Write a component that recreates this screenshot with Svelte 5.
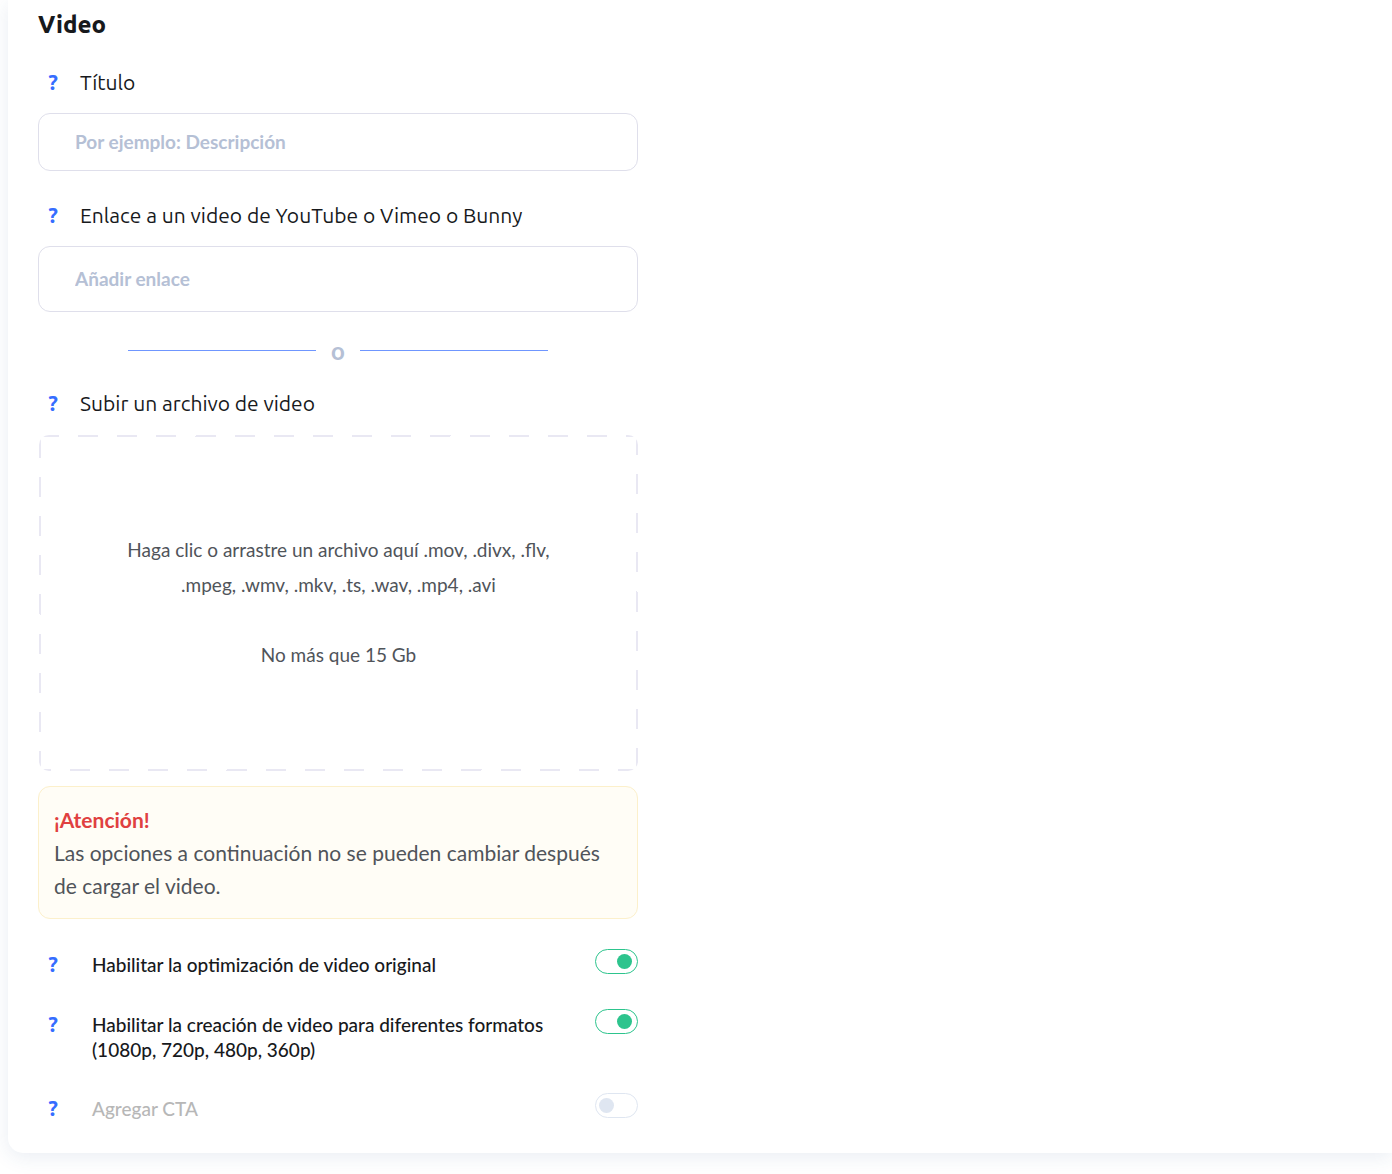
<script>
    let title = $state('');
    let link = $state('');

    let options = $state([
        { id: 'optimize', label: 'Habilitar la optimización de video original', checked: true, disabled: false },
        { id: 'formats', label: 'Habilitar la creación de video para diferentes formatos (1080p, 720p, 480p, 360p)', checked: true, disabled: false },
        { id: 'cta', label: 'Agregar CTA', checked: false, disabled: true }
    ]);
</script>

{#snippet help()}
    <button type="button" class="help" aria-label="Ayuda">?</button>
{/snippet}

<main class="page">
    <section class="card">
        <form class="form">
            <h2>Video</h2>

            <div class="label-row">
                {@render help()}
                <label for="title">Título</label>
            </div>
            <input id="title" class="field" type="text" placeholder="Por ejemplo: Descripción" bind:value={title} />

            <div class="label-row">
                {@render help()}
                <label for="link">Enlace a un video de YouTube o Vimeo o Bunny</label>
            </div>
            <input id="link" class="field tall" type="text" placeholder="Añadir enlace" bind:value={link} />

            <div class="divider">o</div>

            <div class="label-row upload">
                {@render help()}
                <span>Subir un archivo de video</span>
            </div>
            <button type="button" class="dropzone">
                <span>Haga clic o arrastre un archivo aquí .mov, .divx, .flv, .mpeg, .wmv, .mkv, .ts, .wav, .mp4, .avi</span>
                <span>No más que 15 Gb</span>
            </button>

            <div class="notice">
                <strong>¡Atención!</strong>
                <p>Las opciones a continuación no se pueden cambiar después de cargar el video.</p>
            </div>

            <div class="options">
                {#each options as option (option.id)}
                    <div class="option" class:disabled={option.disabled}>
                        {@render help()}
                        <label for={option.id}>{option.label}</label>
                        <input
                            id={option.id}
                            class="toggle"
                            type="checkbox"
                            disabled={option.disabled}
                            bind:checked={option.checked}
                        />
                    </div>
                {/each}
            </div>
        </form>
    </section>
</main>

<style>
    :global(body) {
        margin: 0;
        background: #fff;
    }

    .page {
        padding: 0 0 21px 8px;
        overflow: hidden;
        font-family: Lato, sans-serif;
        color: #17191c;
    }

    .card {
        padding: 10px 30px 30px;
        background: #fff;
        border-radius: 0 0 0 15px;
        box-shadow: 0 4px 20px rgba(38, 75, 135, 0.1);
    }

    .form {
        max-width: 600px;
    }

    h2 {
        margin: 0 0 30px;
        font-family: Ubuntu, "Noto Sans", sans-serif;
        font-size: 24px;
        line-height: 30px;
        font-weight: 800;
    }

    .label-row {
        display: flex;
        align-items: center;
        margin-bottom: 19px;
        font-family: Ubuntu, "Noto Sans", sans-serif;
        font-size: 21px;
        line-height: 24px;
        font-weight: 450;
    }

    .label-row.upload {
        margin-bottom: 20px;
    }

    .help {
        flex: none;
        width: 30px;
        margin-right: 12px;
        padding: 0;
        border: 0;
        background: none;
        font-family: Ubuntu, "Noto Sans", sans-serif;
        font-size: 22px;
        line-height: 24px;
        font-weight: 700;
        color: #366dff;
        cursor: pointer;
    }

    .field {
        display: block;
        box-sizing: border-box;
        width: 100%;
        height: 58px;
        margin-bottom: 32px;
        padding: 0 36px 2px;
        border: 1px solid #dfdfeb;
        border-radius: 12px;
        background: #fff;
        font-family: inherit;
        font-size: 19px;
        font-weight: 700;
        color: #17191c;
    }

    .field.tall {
        height: 66px;
        margin-bottom: 24px;
    }

    .field::placeholder {
        color: #b5c0d5;
        opacity: 1;
    }

    .divider {
        display: flex;
        align-items: center;
        gap: 15px;
        margin: 0 90px 25px;
        font-size: 24px;
        line-height: 30px;
        font-weight: 700;
        color: #b5c0d5;
    }

    .divider::before,
    .divider::after {
        content: '';
        flex: 1;
        height: 1px;
        margin-bottom: 2px;
        background: #6f96ff;
    }

    .dropzone {
        --dash: #e9e8f3, #e9e8f3 20px, transparent 20px, transparent 39px, #e9e8f3 39px;
        display: flex;
        flex-direction: column;
        justify-content: center;
        gap: 35px;
        box-sizing: border-box;
        width: calc(100% - 1px);
        min-height: 336px;
        margin: 0 0 15px 1px;
        padding: 30px 75px 32px;
        border: 0;
        border-radius: 10px;
        background:
            repeating-linear-gradient(5deg, var(--dash)) 0 0 / 2px 100% no-repeat,
            repeating-linear-gradient(95deg, var(--dash)) 0 0 / 100% 2px no-repeat,
            repeating-linear-gradient(185deg, var(--dash)) 100% 0 / 2px 100% no-repeat,
            repeating-linear-gradient(275deg, var(--dash)) 0 100% / 100% 2px no-repeat;
        font-family: inherit;
        font-size: 19px;
        line-height: 35px;
        color: #50545a;
        cursor: pointer;
    }

    .notice {
        padding: 16px 15px;
        border: 1px solid #fcf0cb;
        border-radius: 12px;
        background: #fffdf6;
        font-size: 21px;
        line-height: 33px;
        color: #50545a;
    }

    .notice strong {
        display: block;
        color: #e04040;
    }

    .notice p {
        margin: 0;
    }

    .options {
        display: flex;
        flex-direction: column;
        gap: 30px;
        margin-top: 30px;
    }

    .option {
        display: flex;
        align-items: flex-start;
        min-height: 30px;
        font-size: 19px;
        font-weight: 500;
        line-height: 25px;
    }

    .option .help {
        margin: 3px 24px 0 0;
    }

    .option label {
        flex: 1;
        padding: 3px 0 1px;
    }

    .option.disabled label {
        color: #b7b7b7;
    }

    .toggle {
        appearance: none;
        flex: none;
        box-sizing: border-box;
        display: flex;
        align-items: center;
        width: 43px;
        height: 25px;
        margin: 0 0 0 30px;
        padding: 0 5px 0 3px;
        border: 1px solid #dfe6f1;
        border-radius: 13px;
        background: #fff;
        cursor: pointer;
    }

    .toggle::before {
        content: '';
        width: 15px;
        height: 15px;
        border-radius: 50%;
        background: #dfe6f1;
    }

    .toggle:checked {
        justify-content: flex-end;
        border-color: #2dc48d;
    }

    .toggle:checked::before {
        background: #2dc48d;
    }
</style>
